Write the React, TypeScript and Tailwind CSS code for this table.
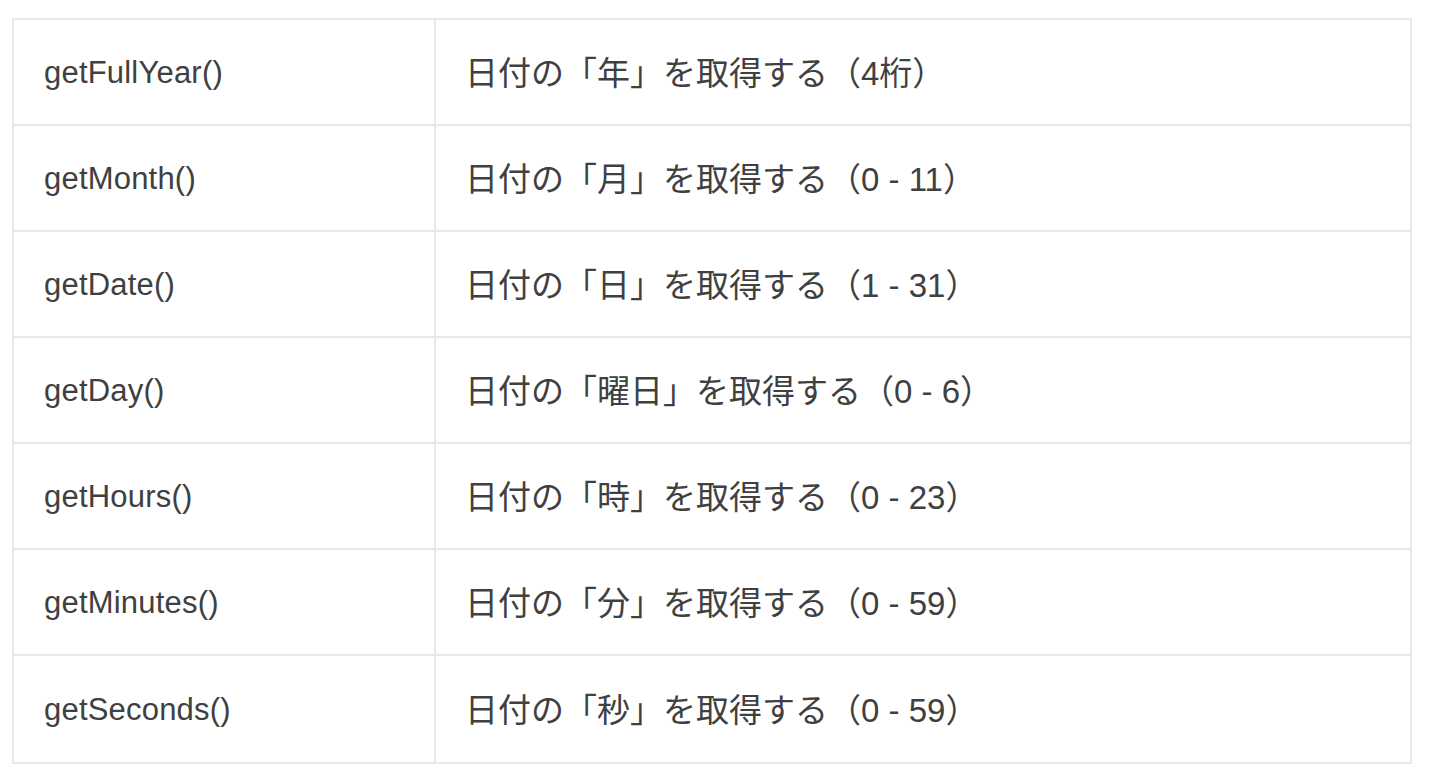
const rows = [
  { method: 'getFullYear()', desc: '日付の「年」を取得する（4桁）' },
  { method: 'getMonth()', desc: '日付の「月」を取得する（0 - 11）' },
  { method: 'getDate()', desc: '日付の「日」を取得する（1 - 31）' },
  { method: 'getDay()', desc: '日付の「曜日」を取得する（0 - 6）' },
  { method: 'getHours()', desc: '日付の「時」を取得する（0 - 23）' },
  { method: 'getMinutes()', desc: '日付の「分」を取得する（0 - 59）' },
  { method: 'getSeconds()', desc: '日付の「秒」を取得する（0 - 59）' },
];

export default function App() {
  return (
    <div
      className="min-h-[780px] bg-white pl-[12px] pt-[18px] text-[#404040]"
      style={{ fontFamily: '"Liberation Sans", "Noto Sans CJK JP", sans-serif' }}
    >
      <div className="w-[1400px] border-2 border-[#e8e8e8]">
        {rows.map((row, i) => (
          <div
            key={row.method}
            className={`flex h-[106px] pt-[3px] ${i < rows.length - 1 ? 'border-b-2 border-[#e8e8e8]' : ''}`}
          >
            <div className="-mt-[3px] flex w-[422px] items-center border-r-2 border-[#e8e8e8] pl-[30px] pt-[3px] text-[31px] tracking-[0.2px]">
              {row.method}
            </div>
            <div className="flex flex-1 items-center pl-[29px] text-[33px]">{row.desc}</div>
          </div>
        ))}
      </div>
    </div>
  );
}
